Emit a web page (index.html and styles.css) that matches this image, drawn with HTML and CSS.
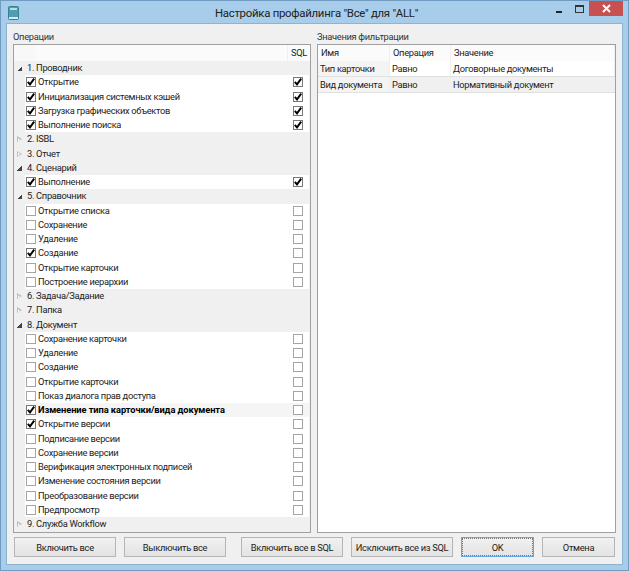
FILE: index.html
```html
<!DOCTYPE html>
<html lang="ru">
<head>
  <meta charset="UTF-8">
  <title>Настройка профайлинга</title>
  <link rel="stylesheet" href="styles.css">
</head>
<body>

  <svg class="defs" width="0" height="0">
    <symbol id="tick" viewBox="0 0 8 8">
      <path d="M0.8 3.8 L3 6.4 L7.2 0.6" fill="none" stroke="#000" stroke-width="1.9"/>
    </symbol>
  </svg>

  <div class="window">
    <div class="titlebar">
      <svg class="app-icon" width="11" height="14" viewBox="0 0 11 14">
        <rect x="0.5" y="0.5" width="10" height="13" rx="1" fill="#4f9db3" stroke="#3a7f97"/>
        <rect x="2" y="2" width="7" height="2" fill="#b4dde4"/>
        <rect x="1" y="11" width="9" height="2" fill="#d3eaef"/>
      </svg>
      <div class="title">Настройка профайлинга "Все" для "ALL"</div>
      <div class="controls">
        <span class="ctl-min"></span>
        <span class="ctl-max"></span>
        <span class="ctl-close">
          <svg width="9" height="9" viewBox="0 0 9 9"><path d="M1 1 L8 8 M8 1 L1 8" stroke="#fff" stroke-width="2"/></svg>
        </span>
      </div>
    </div>

    <div class="client">
      <div class="panels">
        <div class="panel panel-left">
          <div class="caption">Операции</div>
          <div class="box">
            <div class="tree-head"><span class="sql-head">SQL</span></div>
            <div class="group open">1. Проводник</div>
            <div class="item"><i class="cb on"><svg><use href="#tick"/></svg></i><span>Открытие</span><i class="cb on"><svg><use href="#tick"/></svg></i></div>
            <div class="item"><i class="cb on"><svg><use href="#tick"/></svg></i><span>Инициализация системных кэшей</span><i class="cb on"><svg><use href="#tick"/></svg></i></div>
            <div class="item"><i class="cb on"><svg><use href="#tick"/></svg></i><span>Загрузка графических объектов</span><i class="cb on"><svg><use href="#tick"/></svg></i></div>
            <div class="item"><i class="cb on"><svg><use href="#tick"/></svg></i><span>Выполнение поиска</span><i class="cb on"><svg><use href="#tick"/></svg></i></div>
            <div class="group">2. ISBL</div>
            <div class="group">3. Отчет</div>
            <div class="group open">4. Сценарий</div>
            <div class="item"><i class="cb on"><svg><use href="#tick"/></svg></i><span>Выполнение</span><i class="cb on"><svg><use href="#tick"/></svg></i></div>
            <div class="group open">5. Справочник</div>
            <div class="item"><i class="cb"></i><span>Открытие списка</span><i class="cb"></i></div>
            <div class="item"><i class="cb"></i><span>Сохранение</span><i class="cb"></i></div>
            <div class="item"><i class="cb"></i><span>Удаление</span><i class="cb"></i></div>
            <div class="item"><i class="cb on"><svg><use href="#tick"/></svg></i><span>Создание</span><i class="cb"></i></div>
            <div class="item"><i class="cb"></i><span>Открытие карточки</span><i class="cb"></i></div>
            <div class="item"><i class="cb"></i><span>Построение иерархии</span><i class="cb"></i></div>
            <div class="group">6. Задача/Задание</div>
            <div class="group">7. Папка</div>
            <div class="group open">8. Документ</div>
            <div class="item"><i class="cb"></i><span>Сохранение карточки</span><i class="cb"></i></div>
            <div class="item"><i class="cb"></i><span>Удаление</span><i class="cb"></i></div>
            <div class="item"><i class="cb"></i><span>Создание</span><i class="cb"></i></div>
            <div class="item"><i class="cb"></i><span>Открытие карточки</span><i class="cb"></i></div>
            <div class="item"><i class="cb"></i><span>Показ диалога прав доступа</span><i class="cb"></i></div>
            <div class="item selected"><i class="cb on"><svg><use href="#tick"/></svg></i><span>Изменение типа карточки/вида документа</span><i class="cb"></i></div>
            <div class="item"><i class="cb on"><svg><use href="#tick"/></svg></i><span>Открытие версии</span><i class="cb"></i></div>
            <div class="item"><i class="cb"></i><span>Подписание версии</span><i class="cb"></i></div>
            <div class="item"><i class="cb"></i><span>Сохранение версии</span><i class="cb"></i></div>
            <div class="item"><i class="cb"></i><span>Верификация электронных подписей</span><i class="cb"></i></div>
            <div class="item"><i class="cb"></i><span>Изменение состояния версии</span><i class="cb"></i></div>
            <div class="item"><i class="cb"></i><span>Преобразование версии</span><i class="cb"></i></div>
            <div class="item"><i class="cb"></i><span>Предпросмотр</span><i class="cb"></i></div>
            <div class="group">9. Служба Workflow</div>
          </div>
        </div>

        <div class="panel panel-right">
          <div class="caption">Значения фильтрации</div>
          <div class="box">
            <div class="grid-row grid-head"><span>Имя</span><span>Операция</span><span>Значение</span></div>
            <div class="grid-row"><span>Тип карточки</span><span>Равно</span><span>Договорные документы</span></div>
            <div class="grid-row current"><span>Вид документа</span><span>Равно</span><span>Нормативный документ</span></div>
          </div>
        </div>
      </div>

      <div class="buttons">
        <button class="btn btn-a">Включить все</button>
        <button class="btn btn-a btn-gap">Выключить все</button>
        <button class="btn btn-a btn-gap2">Включить все в SQL</button>
        <button class="btn btn-a btn-gap">Исключить все из SQL</button>
        <button class="btn btn-b btn-ok">OK</button>
        <button class="btn btn-b btn-gap">Отмена</button>
      </div>
    </div>
  </div>

</body>
</html>
```

FILE: styles.css
```css
* {
  box-sizing: border-box;
}
body {
  margin: 0;
  font-family: Roboto, sans-serif;
  font-size: 9.3px;
  letter-spacing: -0.3px;
  color: #222;
}
.defs {
  display: block;
  height: 0;
}
.window {
  width: 629px;
  height: 571px;
  background: #a8cdea;
  border: 1px solid #6f9cc0;
  display: flex;
  flex-direction: column;
}
.titlebar {
  height: 22px;
  flex: none;
  display: flex;
  align-items: center;
  padding-left: 7px;
}
.app-icon {
  flex: none;
  margin-top: 1px;
}
.title {
  flex: 1;
  text-align: center;
  font-size: 11.4px;
  letter-spacing: -0.27px;
  color: #222;
  padding: 2px 0 0 58px;
}
.controls {
  display: flex;
  align-self: flex-start;
  align-items: flex-start;
  flex: none;
  margin-right: 5px;
}
.ctl-min {
  width: 6px;
  height: 2px;
  background: #222;
  margin: 10px 13px 0 0;
}
.ctl-max {
  width: 9px;
  height: 8px;
  border: 1px solid #333;
  border-top-width: 2px;
  margin: 4px 5px 0 0;
}
.ctl-close {
  width: 34px;
  height: 15px;
  background: #c75050;
  display: flex;
  align-items: center;
  justify-content: center;
}
.client {
  flex: 1;
  margin: 0 5px 5px;
  background: #f0f0f0;
  border: 1px solid #8fb4d0;
  padding: 7px 6px 7px 6px;
  display: flex;
  flex-direction: column;
}
.panels {
  display: flex;
  flex: 1;
  gap: 6px;
}
.panel {
  display: flex;
  flex-direction: column;
}
.panel-left {
  width: 298px;
}
.panel-right {
  flex: 1;
}
.caption {
  height: 13px;
  line-height: 12px;
  color: #333;
}
.box {
  flex: 1;
  border: 1px solid #a0a0a0;
  background: #fff;
}
.panel-left .box {
  background: #f0f0f0;
}
.tree-head {
  height: 16px;
  background: #fbfbfb;
  display: flex;
  justify-content: flex-end;
  border-left: 22px solid #f8f8f8;
}
.sql-head {
  width: 23px;
  text-align: center;
  line-height: 16px;
  border-left: 1px solid #f0f0f0;
}
.group, .item {
  height: 14.25px;
  line-height: 14px;
  white-space: nowrap;
}
.group {
  padding-left: 13px;
  position: relative;
}
.group::before {
  content: "";
  position: absolute;
  left: 3px;
  top: 4px;
  border-left: 5px solid #bdbdbd;
  border-top: 3.5px solid transparent;
  border-bottom: 3.5px solid transparent;
}
.group::after {
  content: "";
  position: absolute;
  left: 4px;
  top: 5.5px;
  border-left: 2.5px solid #f7f7f7;
  border-top: 2px solid transparent;
  border-bottom: 2px solid transparent;
}
.group.open::before {
  left: 3px;
  top: 5px;
  border: 0;
  width: 5px;
  height: 5px;
  background: linear-gradient(135deg, transparent 50%, #444 50%);
}
.group.open::after {
  display: none;
}
.item {
  margin: 0 1px 0 11px;
  background: #fff;
  display: flex;
  align-items: center;
  padding: 0 6px 0 1px;
}
.item span {
  flex: 1;
  padding-left: 2px;
}
.item.selected {
  background: #f5f5f5;
  font-weight: bold;
  letter-spacing: -0.08px;
  color: #000;
}
.cb {
  width: 10px;
  height: 10px;
  flex: none;
  border: 1px solid #a5a5a5;
  background: #fff;
}
.cb.on {
  border-color: #777;
}
.cb svg {
  display: block;
  width: 8px;
  height: 8px;
}
.grid-row {
  height: 16px;
  display: grid;
  grid-template-columns: 72px 61px 1fr;
  line-height: 15px;
  border-bottom: 1px solid #e0e0e0;
}
.grid-row span {
  padding-left: 2px;
  border-right: 1px solid #efefef;
}
.grid-row span:first-child {
  background: #f4f4f4;
}
.grid-head {
  background: #fbfbfb;
  border-bottom: 0;
}
.grid-head span {
  padding-left: 3px;
}
.grid-head span:first-child {
  background: transparent;
}
.grid-row.current {
  background: #f0f0f0;
}
.buttons {
  display: flex;
  height: 20px;
  margin-top: 4px;
  padding-left: 1px;
}
.btn {
  height: 20px;
  padding: 0;
  font: inherit;
  letter-spacing: inherit;
  white-space: nowrap;
  color: #222;
  border: 1px solid #b5b5b5;
  background: linear-gradient(#f1f1f1, #e3e3e3);
}
.btn-a {
  width: 102px;
}
.btn-b {
  width: 73px;
}
.btn-gap {
  margin-left: 8px;
}
.btn-gap2 {
  margin-left: 15px;
}
.btn-ok {
  margin-left: 8px;
  border: 1px solid #5fa8e8;
  outline: 1px dotted #777;
  outline-offset: -2px;
}
```
